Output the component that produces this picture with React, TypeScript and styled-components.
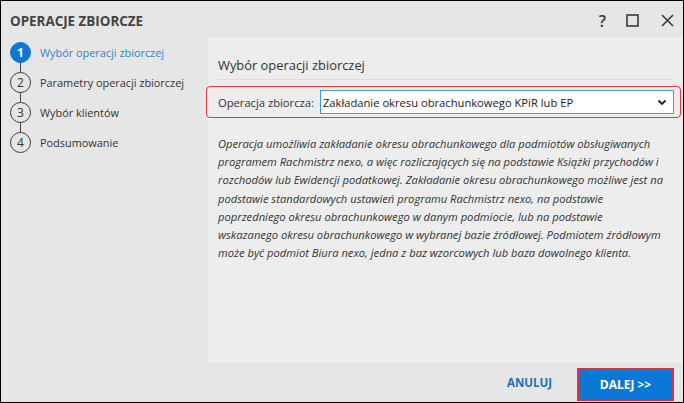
import styled, { createGlobalStyle } from "styled-components";

const GlobalStyle = createGlobalStyle`
  html, body {
    margin: 0;
    padding: 0;
    background: #ffffff;
  }
  body {
    font-family: "Open Sans", "Noto Sans", sans-serif;
  }
`;

const steps = [
  "Wybór operacji zbiorczej",
  "Parametry operacji zbiorczej",
  "Wybór klientów",
  "Podsumowanie",
];

const description = [
  "Operacja umożliwia zakładanie okresu obrachunkowego dla podmiotów obsługiwanych",
  "programem Rachmistrz nexo, a więc rozliczających się na podstawie Książki przychodów i",
  "rozchodów lub Ewidencji podatkowej. Zakładanie okresu obrachunkowego możliwe jest na",
  "podstawie standardowych ustawień programu Rachmistrz nexo, na podstawie",
  "poprzedniego okresu obrachunkowego w danym podmiocie, lub na podstawie",
  "wskazanego okresu obrachunkowego w wybranej bazie źródłowej. Podmiotem źródłowym",
  "może być podmiot Biura nexo, jedna z baz wzorcowych lub baza dowolnego klienta.",
];

const App = () => {
  return (
    <>
      <GlobalStyle />
      <Frame>
        <TitleBar>
          <Title>OPERACJE ZBIORCZE</Title>
          <WindowButtons>
            <HelpMark>?</HelpMark>
            <svg width="13" height="13" viewBox="0 0 13 13">
              <rect x="1" y="1" width="11" height="11" fill="none" stroke="#3a3a3a" strokeWidth="1.6" />
            </svg>
            <svg width="13" height="13" viewBox="0 0 13 13">
              <path d="M1 1 L12 12 M12 1 L1 12" stroke="#3a3a3a" strokeWidth="1.6" />
            </svg>
          </WindowButtons>
        </TitleBar>
        <Body>
          <Sidebar>
            {steps.map((s, i) => (
              <Step key={s} last={i === steps.length - 1}>
                <StepCircle active={i === 0}>{i + 1}</StepCircle>
                <StepLabel active={i === 0}>{s}</StepLabel>
              </Step>
            ))}
          </Sidebar>
          <Panel>
            <Heading>Wybór operacji zbiorczej</Heading>
            <Highlight>
              <FieldLabel>Operacja zbiorcza:</FieldLabel>
              <Select>
                <span>Zakładanie okresu obrachunkowego KPiR lub EP</span>
                <svg width="10" height="7" viewBox="0 0 10 7">
                  <path d="M1.5 1.5 L5 5 L8.5 1.5" fill="none" stroke="#222" strokeWidth="1.9" />
                </svg>
              </Select>
            </Highlight>
            <Description>
              {description.map((line) => (
                <span key={line}>{line}</span>
              ))}
            </Description>
          </Panel>
        </Body>
        <Footer>
          <CancelButton>ANULUJ</CancelButton>
          <NextButton>DALEJ &gt;&gt;</NextButton>
        </Footer>
      </Frame>
    </>
  );
};

const Frame = styled.div`
  width: 684px;
  height: 403px;
  box-sizing: border-box;
  border: 1px solid #000;
  background: #e6e6e6;
  display: flex;
  flex-direction: column;
`;

const TitleBar = styled.div`
  height: 36px;
  box-sizing: border-box;
  flex-shrink: 0;
  display: flex;
  align-items: center;
  justify-content: space-between;
  padding: 3px 9px 0 9px;
`;

const Title = styled.div`
  font-size: 13.4px;
  font-weight: 700;
  color: #444;
`;

const WindowButtons = styled.div`
  display: flex;
  align-items: center;
  gap: 22px;
`;

const HelpMark = styled.span`
  font-size: 16px;
  font-weight: 600;
  color: #3a3a3a;
  margin-right: -2px;
`;

const Body = styled.div`
  flex: 1;
  display: flex;
  min-height: 0;
`;

const Sidebar = styled.div`
  width: 207px;
  flex-shrink: 0;
  padding: 0 0 0 9px;
  box-sizing: border-box;
`;

const Step = styled.div<{ last?: boolean }>`
  position: relative;
  display: flex;
  align-items: center;
  gap: 9px;
  height: 30px;

  &::after {
    content: "";
    display: ${(p) => (p.last ? "none" : "block")};
    position: absolute;
    left: 10px;
    top: 25px;
    width: 1px;
    height: 10px;
    background: #444;
  }
`;

const StepCircle = styled.div<{ active?: boolean }>`
  width: 21px;
  height: 21px;
  box-sizing: border-box;
  border-radius: 50%;
  border: 1.5px solid ${(p) => (p.active ? "#0a78d4" : "#3a3a3a")};
  background: ${(p) => (p.active ? "#0a78d4" : "transparent")};
  color: ${(p) => (p.active ? "#fff" : "#333")};
  font-weight: ${(p) => (p.active ? 700 : 400)};
  font-size: 12px;
  display: flex;
  align-items: center;
  justify-content: center;
`;

const StepLabel = styled.span<{ active?: boolean }>`
  font-size: 10.9px;
  color: ${(p) => (p.active ? "#2b84d6" : "#333")};
`;

const Panel = styled.div`
  flex: 1;
  min-width: 0;
  background: #ededed;
  padding: 19px 10px 0 10px;
`;

const Heading = styled.div`
  font-size: 12.9px;
  color: #333;
  padding-bottom: 5px;
  border-bottom: 1px solid #dcdcdc;
`;

const Highlight = styled.div`
  margin: 6px -8px 0 -12px;
  height: 32px;
  box-sizing: border-box;
  border: 1.5px solid #e03a3a;
  border-radius: 4px;
  display: flex;
  align-items: center;
  padding: 0 6px 0 11px;
  gap: 6px;
`;

const FieldLabel = styled.span`
  font-size: 11.2px;
  color: #333;
`;

const Select = styled.div`
  flex: 1;
  height: 24px;
  box-sizing: border-box;
  background: #fff;
  border: 1.5px solid #3b9ddb;
  display: flex;
  align-items: center;
  justify-content: space-between;
  padding: 0 6px 0 2px;
  font-size: 11.2px;
  color: #222;
`;

const Description = styled.p`
  margin: 17px 0 0 0;
  display: flex;
  flex-direction: column;
  font-size: 11.2px;
  font-style: italic;
  line-height: 18.2px;
  color: #333;
  white-space: nowrap;
`;

const Footer = styled.div`
  height: 39px;
  flex-shrink: 0;
  display: flex;
  align-items: center;
  justify-content: flex-end;
  padding-right: 9px;
  gap: 25px;
`;

const CancelButton = styled.button`
  border: none;
  background: transparent;
  padding: 0;
  font-family: inherit;
  font-size: 11.5px;
  font-weight: 700;
  color: #1f6fb5;
`;

const NextButton = styled.button`
  width: 97px;
  height: 33px;
  margin-top: 4px;
  box-sizing: border-box;
  border: 2px solid #d93240;
  background: #0a78d4;
  color: #fff;
  font-family: inherit;
  font-size: 12px;
  font-weight: 700;
`;

export default App;
